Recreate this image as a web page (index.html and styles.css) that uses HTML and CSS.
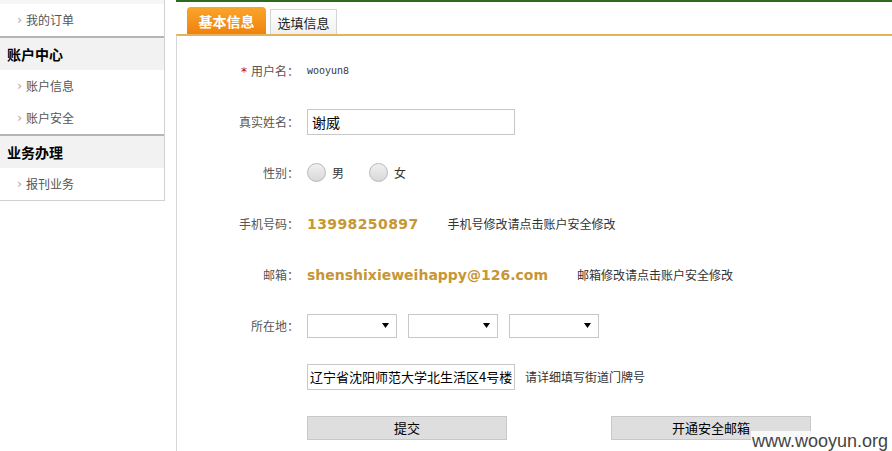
FILE: index.html
```html
<!DOCTYPE html>
<html lang="zh">
<head>
<meta charset="utf-8">
<link rel="stylesheet" href="styles.css">
</head>
<body>
<div class="page">
  <aside class="sidebar">
    <div class="strip"></div>
    <a class="item"><span class="arr">&#8250;</span>我的订单</a>
    <div class="head">账户中心</div>
    <a class="item"><span class="arr">&#8250;</span>账户信息</a>
    <a class="item"><span class="arr">&#8250;</span>账户安全</a>
    <div class="head">业务办理</div>
    <a class="item"><span class="arr">&#8250;</span>报刊业务</a>
  </aside>
  <main class="main">
    <div class="tabs">
      <span class="tab active">基本信息</span>
      <span class="tab">选填信息</span>
    </div>
    <div class="content">
      <div class="row">
        <div class="label"><span class="req">*</span>用户名：</div>
        <div class="val"><span class="mono">wooyun8</span></div>
      </div>
      <div class="row">
        <div class="label">真实姓名：</div>
        <div class="val"><input class="txt" type="text" value="谢威"></div>
      </div>
      <div class="row">
        <div class="label">性别：</div>
        <div class="val">
          <span class="radio"></span><span class="rlabel">男</span>
          <span class="radio"></span><span class="rlabel">女</span>
        </div>
      </div>
      <div class="row">
        <div class="label">手机号码：</div>
        <div class="val"><span class="strong phone">13998250897</span><span class="note wide">手机号修改请点击账户安全修改</span></div>
      </div>
      <div class="row">
        <div class="label">邮箱：</div>
        <div class="val"><span class="strong">shenshixieweihappy@126.com</span><span class="note wide">邮箱修改请点击账户安全修改</span></div>
      </div>
      <div class="row">
        <div class="label">所在地：</div>
        <div class="val selects">
          <select class="sel"><option></option></select>
          <select class="sel"><option></option></select>
          <select class="sel"><option></option></select>
        </div>
      </div>
      <div class="row">
        <div class="label"></div>
        <div class="val"><input class="txt addr" type="text" value="辽宁省沈阳师范大学北生活区4号楼"><span class="note">请详细填写街道门牌号</span></div>
      </div>
      <div class="row">
        <div class="label"></div>
        <div class="val buttons">
          <button class="btn">提交</button>
          <button class="btn">开通安全邮箱</button>
        </div>
      </div>
    </div>
  </main>
</div>
<div class="watermark">www.wooyun.org</div>
</body>
</html>
```

FILE: styles.css
```css
html, body {
  margin: 0;
  padding: 0;
  background: #fff;
  font-family: "Noto Sans CJK SC", "Liberation Sans", sans-serif;
  font-size: 12px;
  color: #333;
  overflow: hidden;
}
.page {
  display: flex;
  align-items: flex-start;
  width: 892px;
  height: 451px;
}
.sidebar {
  width: 164px;
  border-right: 1px solid #d0d0d0;
  border-bottom: 1px solid #d0d0d0;
  display: flex;
  flex-direction: column;
}
.strip {
  height: 4px;
  background: #f6f6f6;
}
.item {
  display: flex;
  align-items: center;
  height: 32px;
  padding-left: 17px;
  color: #555;
  font-size: 12px;
  line-height: 30px;
}
.arr {
  color: #aaa;
  font-size: 13px;
  width: 9px;
  font-family: "DejaVu Sans", sans-serif;
}
.head {
  height: 32px;
  border-top: 2px solid #b5b5b5;
  background: #f2f2f2;
  display: flex;
  align-items: center;
  padding-left: 7px;
  font-size: 14px;
  font-weight: bold;
  color: #000;
}
.main {
  flex: 1;
  margin-left: 11px;
  height: 451px;
  border-top: 2px solid #2d6a1f;
  display: flex;
  flex-direction: column;
}
.tabs {
  display: flex;
  align-items: flex-end;
  height: 35px;
  padding-left: 11px;
  gap: 4px;
}
.tab {
  box-sizing: border-box;
  width: 67px;
  height: 25px;
  border: 1px solid #d4d4d4;
  border-bottom: none;
  background: linear-gradient(#ffffff, #f0f0f0);
  display: flex;
  align-items: center;
  justify-content: center;
  font-size: 13px;
  color: #222;
}
.tab.active {
  width: 79px;
  height: 27px;
  border: none;
  border-radius: 4px 4px 0 0;
  background: linear-gradient(#f9a52c, #f0820f);
  color: #fff;
  font-weight: bold;
  font-size: 14px;
}
.content {
  flex: 1;
  border-top: 2px solid #e2b25c;
  border-left: 1px solid #d6d6d6;
  padding-top: 9px;
}
.row {
  display: flex;
  align-items: center;
  height: 51px;
}
.label {
  width: 122px;
  text-align: right;
  color: #555;
  font-size: 12px;
  margin-right: 8px;
}
.req {
  color: #c00;
  margin-right: 4px;
  font-family: "DejaVu Sans", sans-serif;
}
.val {
  display: flex;
  align-items: center;
}
.mono {
  font-family: "Liberation Mono", monospace;
  font-size: 10px;
  color: #333;
  padding-top: 2px;
}
.txt {
  box-sizing: border-box;
  width: 208px;
  height: 26px;
  border: 1px solid #c8c8c8;
  padding: 0 4px;
  font-family: "Noto Sans CJK SC", sans-serif;
  font-size: 14px;
  color: #000;
  outline: none;
}
.txt.addr {
  font-size: 13px;
  padding: 0 2px;
}
.radio {
  box-sizing: border-box;
  width: 19px;
  height: 19px;
  border-radius: 50%;
  border: 1px solid #b8b8b8;
  background: linear-gradient(#f0f0f0, #d8d8d8);
}
.rlabel {
  margin-left: 6px;
  margin-right: 25px;
  color: #333;
}
.strong {
  font-family: "DejaVu Sans", sans-serif;
  font-weight: bold;
  font-size: 14px;
  color: #c89632;
}
.strong.phone {
  letter-spacing: 0.4px;
}
.note {
  margin-left: 10px;
  color: #333;
}
.note.wide {
  margin-left: 29px;
}
.selects {
  gap: 11px;
}
.sel {
  box-sizing: border-box;
  width: 90px;
  height: 24px;
  border: 1px solid #c8c8c8;
  background: #fff url("data:image/svg+xml,%3Csvg xmlns='http://www.w3.org/2000/svg' width='7' height='7'%3E%3Cpath d='M0 1h7L3.5 6z' fill='%23000'/%3E%3C/svg%3E") no-repeat right 7px center;
  appearance: none;
  -webkit-appearance: none;
  border-radius: 0;
}
.buttons {
  gap: 104px;
}
.btn {
  box-sizing: border-box;
  width: 200px;
  height: 24px;
  background: #dedede;
  border: 1px solid #c8c8c8;
  font-family: "Noto Sans CJK SC", sans-serif;
  font-size: 13px;
  color: #000;
  padding: 0;
}
.watermark {
  position: absolute;
  right: 3px;
  bottom: 0;
  font-family: "Liberation Sans", sans-serif;
  font-size: 18px;
  color: #444;
  background: rgba(255,255,255,0.8);
  line-height: 20px;
  padding: 0 1px;
}
```
